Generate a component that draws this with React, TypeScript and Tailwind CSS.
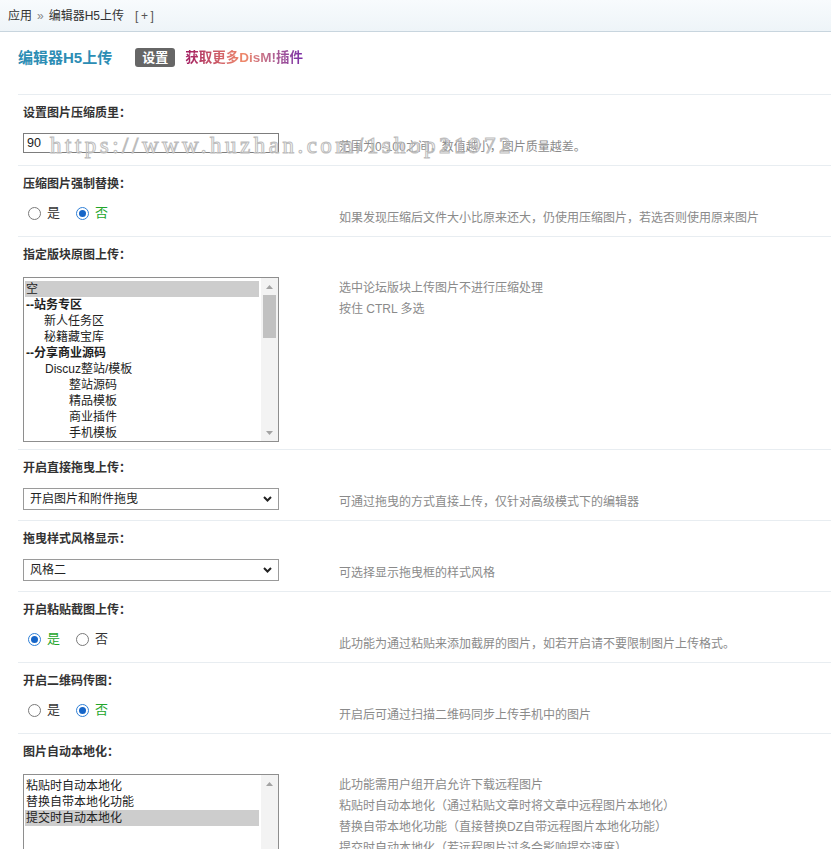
import React from "react";

type Item = { text: string; indent?: number; bold?: boolean; selected?: boolean };

const forumItems: Item[] = [
  { text: "空", selected: true },
  { text: "--站务专区", bold: true },
  { text: "新人任务区", indent: 18 },
  { text: "秘籍藏宝库", indent: 18 },
  { text: "--分享商业源码", bold: true },
  { text: "Discuz整站/模板", indent: 19 },
  { text: "整站源码", indent: 43 },
  { text: "精品模板", indent: 43 },
  { text: "商业插件", indent: 43 },
  { text: "手机模板", indent: 43 },
];

const localItems: Item[] = [
  { text: "粘贴时自动本地化" },
  { text: "替换自带本地化功能" },
  { text: "提交时自动本地化", selected: true },
];

const Arrow = ({ down }: { down?: boolean }) => (
  <div className="flex h-[17px] items-center justify-center">
    <svg width="7" height="4" viewBox="0 0 7 4">
      <path d={down ? "M0 0h7L3.5 4z" : "M3.5 0L7 4H0z"} fill="#a3a3a3" />
    </svg>
  </div>
);

const ListBox = ({ items, heightClass, thumb }: { items: Item[]; heightClass: string; thumb?: boolean }) => (
  <div className={`mt-[2px] flex w-[256px] border border-[#8e8e8e] bg-white ${heightClass}`}>
    <div className="flex-1 overflow-hidden pl-[1px] pr-[2px] pt-[3px]">
      {items.map((it) => (
        <div
          key={it.text}
          className={`h-[16px] whitespace-nowrap pl-[1px] leading-[16px] text-[12px] text-[#222] ${it.bold ? "font-bold" : ""} ${it.selected ? "bg-[#cdcdcd]" : ""}`}
          style={it.indent ? { paddingLeft: it.indent + 1 } : undefined}
        >
          {it.text}
        </div>
      ))}
    </div>
    <div className="flex w-[17px] flex-col bg-[#f3f3f3]">
      <Arrow />
      {thumb && <div className="mx-[2px] h-[43px] bg-[#c1c1c1]" />}
      <div className="flex-1" />
      {thumb && <Arrow down />}
    </div>
  </div>
);

const Radio = ({ checked }: { checked: boolean }) =>
  checked ? (
    <span className="flex h-[13px] w-[13px] shrink-0 items-center justify-center rounded-full border border-[#2f7fd6] bg-white">
      <span className="block h-[7px] w-[7px] rounded-full bg-[#1565c8]" />
    </span>
  ) : (
    <span className="block h-[13px] w-[13px] shrink-0 rounded-full border border-[#7a7a7a] bg-white" />
  );

const YesNo = ({ yes }: { yes: boolean }) => (
  <div className="flex h-[18px] items-center pl-[5px] text-[13px]">
    <Radio checked={yes} />
    <span className={`ml-[6px] ${yes ? "text-[#22a52a]" : "text-[#333]"}`}>是</span>
    <span className="ml-[16px] flex">
      <Radio checked={!yes} />
    </span>
    <span className={`ml-[6px] ${yes ? "text-[#333]" : "text-[#22a52a]"}`}>否</span>
  </div>
);

const Select = ({ value }: { value: string }) => (
  <div className="flex h-[22px] w-[256px] items-center justify-between border border-[#9a9a9a] bg-white pl-[6px] pr-[6px] text-[12px] text-[#222]">
    <span>{value}</span>
    <svg width="9" height="6" viewBox="0 0 9 6">
      <path d="M1 1l3.5 3.5L8 1" fill="none" stroke="#222" strokeWidth="2" />
    </svg>
  </div>
);

const Row = ({ label, help, children, list }: { label: string; help: React.ReactNode; children: React.ReactNode; list?: boolean }) => (
  <div className="border-t border-[#e8edf1]">
    <div className="h-[35px] pl-[5px] pt-[8px] font-bold leading-[20px] text-[#333]">{label}</div>
    <div className={`flex pl-[5px] ${list ? "pb-[7px] pt-[3px]" : "pb-[10px] pt-[3px]"}`}>
      <div className="w-[316px] shrink-0">{children}</div>
      <div className={`text-[12px] text-[#8a8a8a] ${list ? "mt-[3px] leading-[21px]" : "pt-[6px] leading-[16px]"}`}>{help}</div>
    </div>
  </div>
);

export default function App() {
  return (
    <div className="relative h-[849px] overflow-hidden bg-white text-[12px] text-[#333] [font-family:Liberation_Sans,Noto_Sans_CJK_SC,sans-serif]">
      {/* breadcrumb */}
      <div className="flex h-[32px] items-center border-b border-[#c8d5de] bg-gradient-to-b from-[#f8fbfd] to-[#eef4f8] px-[8px]">
        <span>应用</span>
        <span className="mx-[5px] text-[#888]">»</span>
        <span>编辑器H5上传</span>
        <span className="ml-[11px] tracking-[2.5px] text-[#555]">[+]</span>
      </div>

      {/* title */}
      <div className="flex h-[62px] items-start pl-[18px] pt-[16px]">
        <span className="text-[15px] font-bold leading-[20px] text-[#2c8db4]">编辑器H5上传</span>
        <span className="ml-[23px] rounded-[3px] bg-[#666] px-[7px] text-[13px] font-bold leading-[19px] text-white">设置</span>
        <span className="ml-[10px] bg-gradient-to-r from-[#a1165f] via-[#f08a6a] to-[#7b2aa6] bg-clip-text text-[13.5px] font-bold leading-[20px] text-transparent">
          获取更多DisM!插件
        </span>
      </div>

      <div className="pl-[18px]">
        <Row label="设置图片压缩质里：" help="范围为0-100之间，数值越小，图片质量越差。">
          <div className="h-[20px] w-[256px] border border-[#7d7d7d] bg-white pl-[3px] leading-[18px] text-[12.5px] text-[#222]">90</div>
        </Row>

        <Row label="压缩图片强制替换：" help="如果发现压缩后文件大小比原来还大，仍使用压缩图片，若选否则使用原来图片">
          <YesNo yes={false} />
        </Row>

        <Row
          list
          label="指定版块原图上传："
          help={
            <>
              <div>选中论坛版块上传图片不进行压缩处理</div>
              <div>按住 CTRL 多选</div>
            </>
          }
        >
          <ListBox items={forumItems} heightClass="h-[165px]" thumb />
        </Row>

        <Row label="开启直接拖曳上传：" help="可通过拖曳的方式直接上传，仅针对高级模式下的编辑器">
          <Select value="开启图片和附件拖曳" />
        </Row>

        <Row label="拖曳样式风格显示：" help="可选择显示拖曳框的样式风格">
          <Select value="风格二" />
        </Row>

        <Row label="开启粘贴截图上传：" help="此功能为通过粘贴来添加截屏的图片，如若开启请不要限制图片上传格式。">
          <YesNo yes />
        </Row>

        <Row label="开启二维码传图：" help="开启后可通过扫描二维码同步上传手机中的图片">
          <YesNo yes={false} />
        </Row>

        <Row
          list
          label="图片自动本地化："
          help={
            <>
              <div>此功能需用户组开启允许下载远程图片</div>
              <div>粘贴时自动本地化（通过粘贴文章时将文章中远程图片本地化）</div>
              <div>替换自带本地化功能（直接替换DZ自带远程图片本地化功能）</div>
              <div>提交时自动本地化（若远程图片过多会影响提交速度）</div>
            </>
          }
        >
          <ListBox items={localItems} heightClass="h-[110px]" />
        </Row>
      </div>

      {/* watermark */}
      <div className="pointer-events-none absolute left-[50px] top-[134px] whitespace-nowrap text-[23px] leading-[23px] tracking-[3.5px] text-transparent [-webkit-text-stroke:1px_#bdbdbd] [font-family:Liberation_Serif,serif]">
        https://www.huzhan.com/1shop21972
      </div>
    </div>
  );
}
